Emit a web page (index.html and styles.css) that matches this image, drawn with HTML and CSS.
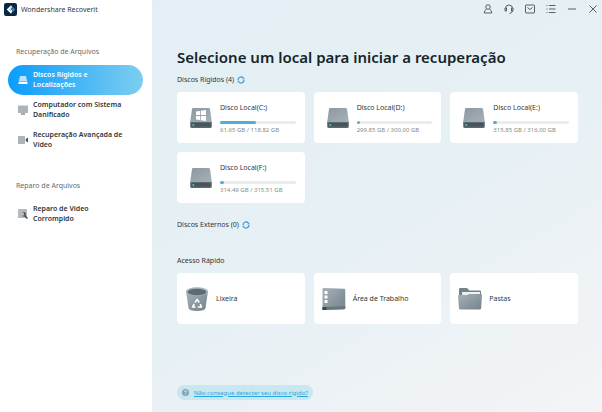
FILE: index.html
```html
<!DOCTYPE html>
<html lang="pt-BR">
<head>
    <meta charset="UTF-8">
    <meta name="viewport" content="width=device-width, initial-scale=1.0">
    <title>Wondershare Recoverit</title>
    <link rel="stylesheet" href="styles.css">
</head>
<body>
    <!-- Shared icons -->
    <svg class="sprite" width="0" height="0" aria-hidden="true">
        <defs>
            <linearGradient id="metal" x1="0" y1="0" x2="1" y2="1">
                <stop offset="0" stop-color="#8d99a1"/>
                <stop offset="1" stop-color="#a5afb6"/>
            </linearGradient>
            <linearGradient id="metal-dark" x1="0" y1="0" x2="1" y2="1">
                <stop offset="0" stop-color="#a8b1b7"/>
                <stop offset="1" stop-color="#74828b"/>
            </linearGradient>
        </defs>
        <symbol id="disk" viewBox="0 0 22 22">
            <path d="M3.200 1h15.600q1 0 1.200 1l1.800 13H.2L2 2q.2-1 1.200-1z" fill="url(#metal)"/>
            <path d="M.2 15h21.600v4.500q0 1.500-1.500 1.500H1.700Q.2 21 .2 19.500z" fill="#5d6970"/>
            <path d="M1.500 16h19v3.500h-19z" fill="#47545c"/>
            <circle cx="3.300" cy="17.900" r="1" fill="#35d3b0"/>
        </symbol>
        <symbol id="refresh" viewBox="0 0 16 16">
            <path d="M2 8.500a6 6 0 0 1 10.500-4.500M14 7.500a6 6 0 0 1-10.500 4.500" fill="none" stroke="#2d94d8" stroke-width="2.200"/>
            <path d="M14.500 2.500v4h-4zM1.500 13.500v-4h4z" fill="#2d94d8"/>
        </symbol>
    </svg>

    <div class="app">
        <aside class="sidebar">
            <div class="brand">
                <svg class="logo" viewBox="0 0 24 24" aria-hidden="true">
                    <rect width="24" height="24" rx="4" fill="#08263f"/>
                    <path d="M13 4v5l-3 3 3 3v5l-8-8z" fill="#fff"/>
                    <path d="M13 4l3 4-3 3-3 1z" fill="#a9d9f5"/>
                    <path d="M10 12l3-1 3 4-3 5v-5z" fill="#d9effb"/>
                    <path d="M17 8l4 4-4 4-3-4z" fill="#3c84b9"/>
                </svg>
                <span>Wondershare Recoverit</span>
            </div>

            <nav class="menu">
                <h2>Recuperação de Arquivos</h2>
                <a class="menu-item active" href="#discos">
                    <svg viewBox="0 0 20 20" aria-hidden="true">
                        <path d="M5 2h10q1 0 1.200 1L18.500 13h-17L3.800 3Q4 2 5 2z" fill="#b9e4ff"/>
                        <path d="M1 14h18v3q0 1-1 1H2q-1 0-1-1z" fill="#fff"/>
                    </svg>
                    <span>Discos Rígidos e Localizações</span>
                </a>
                <a class="menu-item" href="#sistema">
                    <svg viewBox="0 0 20 20" aria-hidden="true">
                        <rect y="1" width="20" height="15" rx="1" fill="#adb3b6"/>
                        <path d="M6 17h8v2H6z" fill="#4d565b"/>
                    </svg>
                    <span>Computador com Sistema Danificado</span>
                </a>
                <a class="menu-item" href="#avancada">
                    <svg viewBox="0 0 20 20" aria-hidden="true">
                        <rect y="2" width="14" height="16" rx="1" fill="#adb3b6"/>
                        <path d="M15.500 8l4.500-3v10l-4.500-3z" fill="#4d565b"/>
                    </svg>
                    <span>Recuperação Avançada de Vídeo</span>
                </a>
            </nav>

            <nav class="menu">
                <h2>Reparo de Arquivos</h2>
                <a class="menu-item" href="#reparo">
                    <svg viewBox="0 0 20 20" aria-hidden="true">
                        <rect width="18" height="18" rx="1" fill="#b4babd"/>
                        <path d="M9 7q4-2 6 1t0 5l5 5-2 2-5-5q-4 1-6-3l3 2 3-2-1-4z" fill="#3f494e"/>
                    </svg>
                    <span>Reparo de Vídeo Corrompido</span>
                </a>
            </nav>
        </aside>

        <main class="content">
            <div class="toolbar">
                <button type="button" aria-label="Conta">
                    <svg viewBox="0 0 20 20"><circle cx="10" cy="6" r="4.500"/><path d="M7 10q-4 2-4.500 8h15Q17 12 13 10"/></svg>
                </button>
                <button type="button" aria-label="Suporte">
                    <svg viewBox="0 0 20 20"><path d="M3 9a7 7 0 0 1 14 0M17 13q0 5-6 6"/><path d="M2 8h3v6H2zM15 8h3v6h-3z"/></svg>
                </button>
                <button type="button" aria-label="Mensagens">
                    <svg viewBox="0 0 20 20"><rect x="1" y="2" width="18" height="16" rx="1"/><path d="M5 7l5 4 5-4"/></svg>
                </button>
                <button type="button" aria-label="Menu">
                    <svg viewBox="0 0 20 20"><path d="M6 3h13M6 10h13M6 17h13M1 3h2M1 10h2M1 17h2"/></svg>
                </button>
                <button type="button" aria-label="Minimizar">
                    <svg viewBox="0 0 20 20"><path d="M2 10h16"/></svg>
                </button>
                <button type="button" aria-label="Fechar">
                    <svg viewBox="0 0 20 20"><path d="M3 3l14 14M17 3L3 17"/></svg>
                </button>
            </div>

            <h1>Selecione um local para iniciar a recuperação</h1>

            <section>
                <div class="section-title">
                    <h2>Discos Rígidos (4)</h2>
                    <button type="button" aria-label="Atualizar discos rígidos"><svg><use href="#refresh"/></svg></button>
                </div>
                <div class="cards">
                    <button type="button" class="card disk">
                        <svg class="disk-icon" viewBox="0 0 22 22">
                            <use href="#disk"/>
                            <path d="M6 4.500l4-.6v4.200H6zM10.800 3.800l5.200-.8v5.100h-5.200zM6 8.900h4v4.200l-4-.6zM10.800 8.900H16V14l-5.200-.8z" fill="#fff"/>
                        </svg>
                        <span class="disk-info">
                            <span class="name">Disco Local(C:)</span>
                            <span class="bar"><span class="fill" style="width: 48%"></span></span>
                            <span class="size">61.65 GB / 118.82 GB</span>
                        </span>
                    </button>
                    <button type="button" class="card disk">
                        <svg class="disk-icon"><use href="#disk"/></svg>
                        <span class="disk-info">
                            <span class="name">Disco Local(D:)</span>
                            <span class="bar"><span class="fill" style="width: 5%"></span></span>
                            <span class="size">299.85 GB / 300.00 GB</span>
                        </span>
                    </button>
                    <button type="button" class="card disk">
                        <svg class="disk-icon"><use href="#disk"/></svg>
                        <span class="disk-info">
                            <span class="name">Disco Local(E:)</span>
                            <span class="bar"><span class="fill" style="width: 5%"></span></span>
                            <span class="size">315.85 GB / 316.00 GB</span>
                        </span>
                    </button>
                    <button type="button" class="card disk">
                        <svg class="disk-icon"><use href="#disk"/></svg>
                        <span class="disk-info">
                            <span class="name">Disco Local(F:)</span>
                            <span class="bar"><span class="fill" style="width: 5%"></span></span>
                            <span class="size">314.49 GB / 315.51 GB</span>
                        </span>
                    </button>
                </div>
            </section>

            <section class="external">
                <div class="section-title">
                    <h2>Discos Externos (0)</h2>
                    <button type="button" aria-label="Atualizar discos externos"><svg><use href="#refresh"/></svg></button>
                </div>
            </section>

            <section class="quick">
                <div class="section-title">
                    <h2>Acesso Rápido</h2>
                </div>
                <div class="cards">
                    <button type="button" class="card place">
                        <svg viewBox="0 0 24 24" aria-hidden="true">
                            <path d="M1 4l2.500 17Q4 24 12 24t8.500-3L23 4z" fill="url(#metal-dark)"/>
                            <ellipse cx="12" cy="4.500" rx="11" ry="4.200" fill="#a9b3ba"/>
                            <ellipse cx="12" cy="5" rx="9.400" ry="3.200" fill="#5c6b74"/>
                            <path d="M10 15.500l2.200-3 2 3M15.200 17l1.300 3h-3.700M10.500 20H7.600l1.600-3" fill="none" stroke="#fff" stroke-width="1.600" stroke-linejoin="round"/>
                        </svg>
                        <span>Lixeira</span>
                    </button>
                    <button type="button" class="card place">
                        <svg viewBox="0 0 24 24" aria-hidden="true">
                            <path d="M1.500 1l20.500.8q1.300 0 1.300 1.200v18q0 1.300-1.300 1.300L.5 23V2q0-1 1-1z" fill="url(#metal-dark)"/>
                            <path d="M.5 20l22.800-.7V21q0 1.300-1.300 1.300L.5 23z" fill="#68767f"/>
                            <path d="M.5 20h4v3h-4z" fill="#3d484f"/>
                            <path d="M2.500 4h3v3h-3zM2.500 8.500h3v3h-3zM2.500 13h3v3h-3z" fill="#fff"/>
                        </svg>
                        <span>Área de Trabalho</span>
                    </button>
                    <button type="button" class="card place">
                        <svg viewBox="0 0 24 24" aria-hidden="true">
                            <path d="M1 2q0-1 1-1h7l2.500 2.500H22q1 0 1 1V16H1z" fill="#74828b"/>
                            <path d="M4 5h18v7H4z" fill="#edf1f3"/>
                            <path d="M1 8h8l2-1h12q1 0 1 1l-.8 13q-.1 1.500-1.500 1.500H2.500Q1 22.500.9 21L0 9q0-1 1-1z" fill="url(#metal-dark)"/>
                        </svg>
                        <span>Pastas</span>
                    </button>
                </div>
            </section>

            <div class="help">
                <svg viewBox="0 0 16 16" aria-hidden="true">
                    <circle cx="8" cy="8" r="8" fill="#85a3b0"/>
                    <path d="M5.500 6.300a2.500 2.500 0 1 1 3.500 2.200q-1 .5-1 1.500M8 11.500v1.500" fill="none" stroke="#fff" stroke-width="1.600"/>
                </svg>
                <a href="#ajuda">Não consegue detectar seu disco rígido?</a>
            </div>
        </main>
    </div>
</body>
</html>
```
FILE: styles.css
```css
:root {
    --text: #30373b;
    --muted: #858b8e;
    --blue: #2ba5dd;
    --bar: #4fb0d3;
}

* {
    box-sizing: border-box;
}

body {
    margin: 0;
    font-family: "Noto Sans", "Open Sans", sans-serif;
    font-size: 7px;
    line-height: 10px;
    color: var(--text);
}

h1,
h2 {
    margin: 0;
    font-size: 7px;
    font-weight: 400;
}

button {
    font: inherit;
    color: inherit;
    border: none;
    padding: 0;
    background: none;
    text-align: left;
    cursor: pointer;
}

svg {
    display: block;
    flex-shrink: 0;
}

.sprite {
    position: absolute;
}

.app {
    display: grid;
    grid-template-columns: 152px 1fr;
    min-height: 100vh;
}

/* Sidebar */
.sidebar {
    background: #fff;
}

.brand {
    display: flex;
    align-items: center;
    gap: 4px;
    height: 19px;
    padding-left: 4px;
}

.logo {
    width: 13px;
    height: 13px;
}

.menu {
    padding: 0 9px 0 8px;
    margin-top: 28px;
}

.menu + .menu {
    margin-top: 26px;
}

.menu h2 {
    padding-left: 8px;
    margin-bottom: 8px;
    color: #646b6f;
}

.menu-item {
    display: flex;
    align-items: center;
    gap: 5px;
    height: 30px;
    padding: 0 20px 0 10px;
    border-radius: 15px;
    font-weight: 600;
    color: var(--text);
    text-decoration: none;
}

.menu-item svg {
    width: 10px;
    height: 10px;
}

.menu-item.active {
    color: #fff;
    background: linear-gradient(90deg, #0a9dfc, #7dcdf0);
}

/* Main area */
.content {
    display: flex;
    flex-direction: column;
    align-items: stretch;
    padding: 0 24px 12px 25px;
    background: linear-gradient(150deg, #e3eff4, #e6f0f5 50%, #f3f4f6);
}

.toolbar {
    display: flex;
    justify-content: flex-end;
    align-items: center;
    gap: 11px;
    height: 18px;
    margin-right: -20px;
}

.toolbar svg {
    width: 10px;
    height: 10px;
    fill: none;
    stroke: #566167;
    stroke-width: 2;
}

h1 {
    margin-top: 28px;
    font-size: 15px;
    line-height: 22px;
    font-weight: 600;
    color: #16242b;
}

.section-title {
    display: flex;
    align-items: center;
    gap: 3px;
    height: 10px;
    margin: 7px 0;
}

.section-title svg {
    width: 8px;
    height: 8px;
}

.cards {
    display: grid;
    grid-template-columns: repeat(3, 1fr);
    gap: 9px;
}

.card {
    display: flex;
    align-items: center;
    height: 51px;
    border-radius: 4px;
    background: #fff;
}

.disk {
    gap: 8px;
    padding: 0 9px 0 13px;
}

.disk-icon {
    width: 22px;
    height: 22px;
}

.disk-info {
    display: flex;
    flex-direction: column;
    flex: 1;
}

.bar {
    height: 3px;
    margin: 8px 0 2px;
    border-radius: 2px;
    background: #ebeced;
}

.disk-info {
    padding-top: 2px;
}

.fill {
    display: block;
    height: 3px;
    border-radius: 2px;
    background: var(--bar);
}

.size {
    font-size: 6px;
    line-height: 9px;
    color: var(--muted);
}

.place {
    gap: 7px;
    padding-left: 8px;
}

.place svg {
    width: 24px;
    height: 24px;
}

.external {
    margin-top: 10px;
}

.quick {
    margin-top: 12px;
}

.help {
    display: flex;
    align-items: center;
    align-self: flex-start;
    gap: 5px;
    height: 15px;
    margin-top: auto;
    padding: 0 5px;
    border-radius: 8px;
    background: #c7e7f1;
}

.help svg {
    width: 7px;
    height: 7px;
}

.help a {
    font-size: 6px;
    color: var(--blue);
}
```
